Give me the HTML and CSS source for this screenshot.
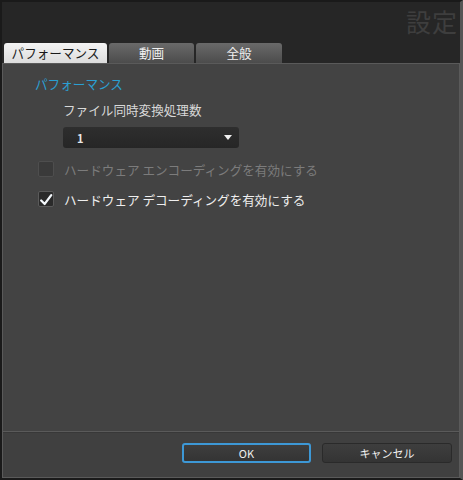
FILE: index.html
```html
<!DOCTYPE html>
<html lang="ja">
<head>
<meta charset="utf-8">
<link rel="stylesheet" href="styles.css">
</head>
<body>
<div class="window">
  <div class="titlebar"><span class="title">設定</span></div>
  <div class="tabs">
    <div class="tab active">パフォーマンス</div>
    <div class="tab">動画</div>
    <div class="tab">全般</div>
  </div>
  <div class="panel">
    <div class="section-title">パフォーマンス</div>
    <div class="label">ファイル同時変換処理数</div>
    <div class="select"><span>1</span><span class="arrow"></span></div>
    <div class="check disabled"><span class="box"></span><span>ハードウェア エンコーディングを有効にする</span></div>
    <div class="check"><span class="box checked"><svg viewBox="0 0 16 16" width="16" height="16"><path d="M2.5 8.5 L6.5 12.5 L14 2.5" fill="none" stroke="#f4f8fc" stroke-width="2.6" stroke-linecap="round" stroke-linejoin="round"/></svg></span><span>ハードウェア デコーディングを有効にする</span></div>
  </div>
  <div class="footer">
    <button class="btn ok">OK</button>
    <button class="btn">キャンセル</button>
  </div>
</div>
</body>
</html>
```
FILE: styles.css
```css
html, body { margin: 0; padding: 0; background: #1f1f1f; }
body { font-family: "Noto Sans CJK JP", "Noto Sans", sans-serif; }
.window {
  width: 463px; height: 480px; box-sizing: border-box;
  background: #262626;
  border: 2px solid #1a1a1a;
  border-right: 3px solid #555;
  display: flex; flex-direction: column;
  overflow: hidden;
}
.titlebar { height: 41px; display: flex; justify-content: flex-end; align-items: flex-start; }
.title { color: #3e3e3e; font-size: 25px; line-height: 30px; margin-top: 4px; margin-right: 2px; letter-spacing: 1px; }
.tabs { display: flex; height: 20px; padding-left: 2px; gap: 2px; }
.tab {
  width: 85px; height: 20px; box-sizing: border-box;
  background: linear-gradient(#6a6a6a, #4c4c4c);
  border-radius: 3px 3px 0 0;
  color: #f0f0f0; font-size: 12.6px; line-height: 20px; text-align: center;
}
.tab.active { width: 103px; background: linear-gradient(#f4f4f4, #dcdcdc); color: #1a1a1a; }
.tab:nth-child(3) { width: 86px; }
.panel {
  flex: 1; background: #434343;
  border-top: 1px solid #5a5a5a; border-left: 1px solid #5a5a5a; border-right: 1px solid #5a5a5a;
  padding: 11px 0 0 32px;
  display: flex; flex-direction: column; align-items: flex-start;
}
.section-title { color: #2b9fd2; font-size: 12.6px; line-height: 18px; }
.label { color: #d8d8d8; font-size: 12.6px; line-height: 18px; margin: 8px 0 0 28px; }
.select {
  margin: 8px 0 0 28px; width: 176px; height: 21px; box-sizing: border-box;
  background: linear-gradient(#2e2e2e, #262626); border-radius: 3px;
  display: flex; align-items: center; justify-content: space-between;
  padding: 0 7px 0 14px; color: #e8e8e8; font-size: 11px; font-weight: bold;
}
.arrow { width: 0; height: 0; border-left: 4px solid transparent; border-right: 4px solid transparent; border-top: 5px solid #f0f0f0; }
.check { display: flex; align-items: center; gap: 10px; font-size: 12.6px; color: #efefef; height: 18px; margin: 12px 0 0 3px; }
.check + .check { margin-top: 12px; }
.check.disabled { color: #7c7c7c; }
.box { width: 16px; height: 16px; box-sizing: border-box; background: #3a3a3a; border: 1px solid #4e4e4e; border-radius: 2px; display: flex; }
.box.checked { background: #2a2a2a; border-color: #5a5a5a; }
.footer {
  height: 41px; background: #404040;
  border: 1px solid #5a5a5a;
  box-shadow: inset 0 1px 0 #383838;
  display: flex; justify-content: flex-end; align-items: center; gap: 11px; padding: 0 7px 4px 0;
}
.btn {
  width: 130px; height: 20px; box-sizing: border-box;
  background: linear-gradient(#3e3e3e, #343434);
  border: 1px solid #2a2a2a; border-radius: 3px;
  color: #f0f0f0; font-family: inherit; font-size: 11px; font-weight: normal; padding: 0; line-height: 18px;
}
.btn.ok { width: 129px; border: 2px solid #3d98d6; line-height: 16px; }
```
